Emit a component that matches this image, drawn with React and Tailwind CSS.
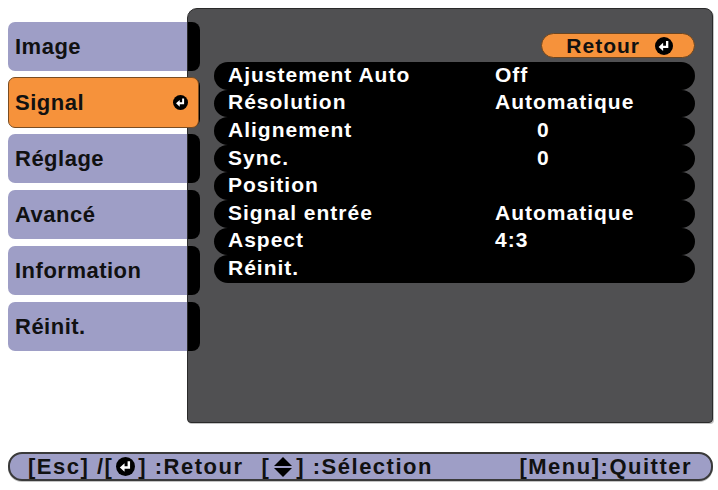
import React from 'react'

const MENU = ['Image', 'Signal', 'Réglage', 'Avancé', 'Information', 'Réinit.']

const ROWS = [
  { label: 'Ajustement Auto', value: 'Off' },
  { label: 'Résolution', value: 'Automatique' },
  { label: 'Alignement', value: '0', indent: true },
  { label: 'Sync.', value: '0', indent: true },
  { label: 'Position', value: '' },
  { label: 'Signal entrée', value: 'Automatique' },
  { label: 'Aspect', value: '4:3' },
  { label: 'Réinit.', value: '' },
]

function EnterIcon({ size = 16 }) {
  return (
    <svg width={size} height={size} viewBox="0 0 20 20" className="shrink-0">
      <circle cx="10" cy="10" r="10" fill="#000" />
      <path d="M13.5 4.5 V11 H8" fill="none" stroke="#fff" strokeWidth="2.6" />
      <path d="M4 11 L9 6.5 L9 15.5 Z" fill="#fff" />
    </svg>
  )
}

function UpDownIcon() {
  return (
    <svg width="18" height="20" viewBox="0 0 18 20" className="shrink-0">
      <path d="M9 0 L18 9 L0 9 Z" fill="#000" />
      <path d="M0 11 L18 11 L9 20 Z" fill="#000" />
    </svg>
  )
}

export default function App() {
  const active = 'Signal'

  return (
    <div className="w-[718px] h-[490px] bg-white pt-[8px] pl-[8px] font-['Liberation_Sans',Arial,sans-serif] font-bold overflow-hidden">
      <div className="flex">
        {/* side menu */}
        <div className="w-[179px] shrink-0 pt-[14px] flex flex-col gap-[7px]">
          {MENU.map((m) =>
            m === active ? (
              <div key={m}
                className="relative z-10 w-[191px] h-[51px] -my-[1px] flex items-center justify-between pl-[6px] pr-[10px] rounded-[7px] bg-[#f6923b] border border-[#7a4d22] text-[22px] tracking-[0.5px] text-[#111]">
                <span>{m}</span>
                <EnterIcon size={15} />
              </div>
            ) : (
              <div key={m}
                className="h-[49px] flex items-center pl-[7px] rounded-l-[7px] bg-[#9e9ec6] text-[22px] tracking-[0.5px] text-[#111]">
                {m}
              </div>
            )
          )}
        </div>

        {/* main panel */}
        <div className="w-[526px] h-[415px] flex bg-[#505052] border border-[#2a2a2a] rounded-tl-[10px] rounded-tr-[8px] rounded-b-[4px] shadow-[1px_1px_0_#c4c4c4]">
          <div className="w-[12px] shrink-0 pt-[13px] flex flex-col gap-[7px]">
            {MENU.map((m) => (
              <div key={m} className="h-[49px] rounded-r-[8px] bg-black" />
            ))}
          </div>

          <div className="flex-1 flex flex-col pl-[14px] pr-[17px]">
            <div className="self-end mt-[24px] w-[154px] h-[25px] flex items-center justify-end gap-[15px] pr-[21px] rounded-full bg-[#f6923b] border border-[#6b4520] text-[21px] tracking-[1px] text-[#111]">
              <span>Retour</span>
              <EnterIcon size={18} />
            </div>

            <div className="mt-[4px] flex flex-col">
              {ROWS.map((r) => (
                <div key={r.label}
                  className="h-[27.6px] flex items-center rounded-full bg-black text-white text-[21px] tracking-[1px] leading-none pb-[3px]">
                  <span className="w-[281px] pl-[14px] shrink-0">{r.label}</span>
                  <span className={r.indent ? 'pl-[42px]' : ''}>{r.value}</span>
                </div>
              ))}
            </div>
          </div>
        </div>
      </div>

      {/* help bar */}
      <div className="mt-[29px] w-[705px] h-[29px] flex items-center justify-between pl-[18px] pr-[19px] rounded-[14px] bg-[#9e9ec6] border-2 border-[#3a3a3a] shadow-[0_1px_0_#c4c4c4] text-[22px] tracking-[1.5px] text-[#111]">
        <div className="flex items-center">
          <span>[Esc] /[</span>
          <span className="mx-[3px]"><EnterIcon size={19} /></span>
          <span>] :Retour</span>
          <span className="ml-[18px]">[</span>
          <span className="mx-[4px]"><UpDownIcon /></span>
          <span>] :Sélection</span>
        </div>
        <span>[Menu]:Quitter</span>
      </div>
    </div>
  )
}
